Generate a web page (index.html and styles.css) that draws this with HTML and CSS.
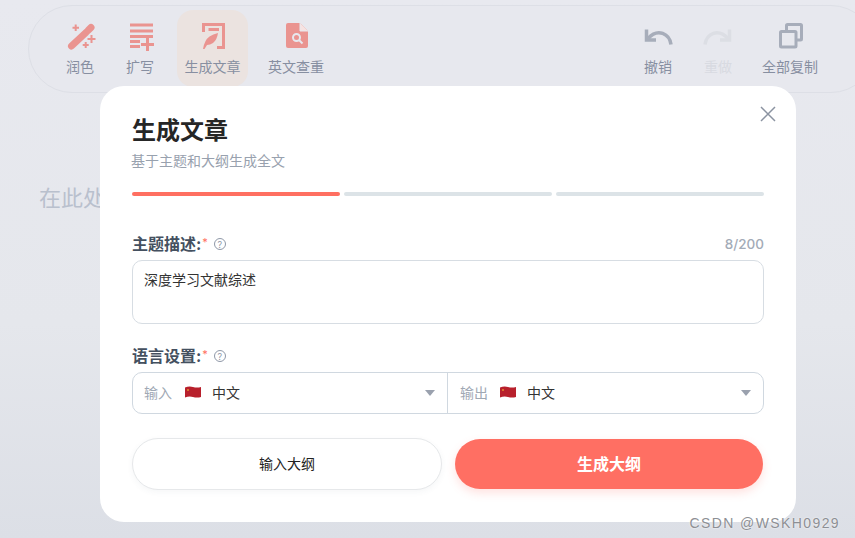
FILE: index.html

```html
<!DOCTYPE html>
<html lang="zh-CN">
<head>
    <meta charset="UTF-8">
    <meta name="viewport" content="width=device-width, initial-scale=1.0">
    <title>生成文章</title>
    <link rel="stylesheet" href="styles.css">
</head>
<body>
    <div class="toolbar">
        <div class="tool-group">
            <div class="tool">
                <svg class="icon" viewBox="0 0 30 30"><path class="wand" d="M6.500 24 21 10.500"/><path class="wand-tip" d="M23.500 8 26 5.500"/><path class="line" d="M7.500 5.700h6.500M10.700 2.500V9M22.500 17h8M26.500 13v8M17.700 23h6M20.700 20v6"/></svg>
                <span class="tool-label">润色</span>
            </div>
            <div class="tool">
                <svg class="icon" viewBox="0 0 30 30"><path class="line wide" d="M5 3h23M5 9h23M5 14.500h23M5 19.500h10M5 24.500h10M16 22.500h13M22.500 16v13"/></svg>
                <span class="tool-label">扩写</span>
            </div>
            <div class="tool tool-active">
                <svg class="icon" viewBox="0 0 30 30"><path class="stroke" d="M5.500 10V2.500h20V25.500H19"/><path class="line wide" d="M10.500 7.500H21"/><path class="fill" d="M5 27q1.500-9 6.500-12.500Q15 12 20 11q-1 7-5 10-3 2-6 2l-2.500 4Z"/></svg>
                <span class="tool-label">生成文章</span>
            </div>
            <div class="tool tool-wide">
                <svg class="icon" viewBox="0 0 30 30"><path class="fill" d="M7 1h12l8 8v15q0 2-2 2H7q-2 0-2-2V3q0-2 2-2Z"/><path class="cut" d="M19 1v8h8"/><circle class="glass" cx="15.500" cy="15.500" r="3.500"/><path class="glass" d="m18 18 3.500 3.500"/></svg>
                <span class="tool-label">英文查重</span>
            </div>
        </div>
        <div class="tool-group">
            <div class="tool">
                <svg class="icon" viewBox="0 0 30 30"><path class="gray" d="M28 22.500C26.500 12 15 5.500 5 16.500"/><path class="gray" d="M3.500 7.500V18H13"/></svg>
                <span class="tool-label">撤销</span>
            </div>
            <div class="tool tool-disabled">
                <svg class="icon" viewBox="0 0 30 30"><path class="gray" d="M2 22.500C3.500 12 15 5.500 25 16.500"/><path class="gray" d="M26.500 7.500V18H17"/></svg>
                <span class="tool-label">重做</span>
            </div>
            <div class="tool tool-copy">
                <svg class="icon" viewBox="0 0 30 30"><rect class="gray square" x="5.500" y="9.500" width="15.500" height="15.500" rx="1"/><path class="gray square" d="M11.500 8V3.500q0-1 1-1h13q1 0 1 1V17q0 1-1 1H22"/></svg>
                <span class="tool-label">全部复制</span>
            </div>
        </div>
    </div>

    <p class="placeholder">在此处输入内容</p>

    <div class="modal">
        <button class="close-btn" aria-label="关闭">
            <svg viewBox="0 0 16 16"><path d="M1 1l14 14M15 1 1 15"/></svg>
        </button>
        <h1 class="modal-title">生成文章</h1>
        <p class="modal-sub">基于主题和大纲生成全文</p>

        <div class="steps">
            <div class="step step-on"></div>
            <div class="step"></div>
            <div class="step"></div>
        </div>

        <div class="field-head topic-head">
            <label class="field-label">主题描述:</label>
            <span class="required">*</span>
            <span class="help">?</span>
            <span class="count">8/200</span>
        </div>
        <textarea class="topic-input">深度学习文献综述</textarea>

        <div class="field-head lang-head">
            <label class="field-label">语言设置:</label>
            <span class="required">*</span>
            <span class="help">?</span>
        </div>
        <div class="lang-select">
            <div class="lang-half">
                <span class="lang-type">输入</span>
                <svg class="flag" viewBox="0 0 16 12"><path fill="#b8202c" d="M0 1.500Q4 0 8 1t8 0v10q-4 1-8 0t-8 .5Z"/><path fill="#d9722c" d="M2 3h2v2H2z"/></svg>
                <span class="lang-name">中文</span>
                <span class="caret"></span>
            </div>
            <div class="lang-half lang-output">
                <span class="lang-type">输出</span>
                <svg class="flag" viewBox="0 0 16 12"><path fill="#b8202c" d="M0 1.500Q4 0 8 1t8 0v10q-4 1-8 0t-8 .5Z"/><path fill="#d9722c" d="M2 3h2v2H2z"/></svg>
                <span class="lang-name">中文</span>
                <span class="caret"></span>
            </div>
        </div>

        <div class="actions">
            <button class="btn btn-plain">输入大纲</button>
            <button class="btn btn-main">生成大纲</button>
        </div>
    </div>

    <div class="watermark">CSDN @WSKH0929</div>
</body>
</html>
```

FILE: styles.css

```css
* {
    box-sizing: border-box;
}
html, body {
    height: 100%;
}
body {
    margin: 0;
    padding-top: 5px;
    height: 538px;
    overflow: hidden;
    position: relative;
    font-family: "Inter", "Noto Sans CJK SC", sans-serif;
    background: linear-gradient(180deg, #e8e9ef 0%, #e5e7ec 60%, #dcdfe6 100%);
}
.toolbar {
    display: flex;
    justify-content: space-between;
    width: 847px;
    height: 88px;
    margin-left: 28px;
    padding: 4px 42px 4px 21px;
    border: 1px solid #dddfe6;
    border-radius: 44px;
    background: #e7e8ee;
}
.tool-group {
    display: flex;
}
.tool {
    display: flex;
    flex-direction: column;
    align-items: center;
    width: 60px;
    height: 77px;
    padding-top: 12px;
    color: #878fa1;
    font-size: 14px;
}
.tool-active {
    width: 71px;
    margin: 0 12px 0 7px;
    border-radius: 16px;
    background: #ebe3e0;
}
.tool-wide {
    width: 72px;
}
.tool-copy {
    width: 84px;
}
.tool-disabled {
    color: #d8dae1;
}
.tool-disabled .gray {
    stroke: #dcdee4;
}
.icon {
    width: 30px;
    height: 30px;
    flex: none;
    overflow: visible;
}
.tool-label {
    margin-top: 6px;
    line-height: 18px;
    white-space: nowrap;
}
.fill {
    fill: #ea9490;
}
.line {
    fill: none;
    stroke: #ea9490;
    stroke-width: 2;
}
.line.wide {
    stroke-width: 3;
}
.wand {
    fill: none;
    stroke: #ea9490;
    stroke-width: 7;
    stroke-linecap: round;
}
.wand-tip {
    fill: none;
    stroke: #ea9490;
    stroke-width: 7;
    stroke-linecap: round;
}
.stroke {
    fill: none;
    stroke: #ea9490;
    stroke-width: 3;
}
.cut {
    fill: #f6e3e2;
    stroke: #e7e8ee;
    stroke-width: 1;
}
.glass {
    fill: none;
    stroke: #e7e8ee;
    stroke-width: 2;
}
.gray {
    fill: none;
    stroke: #a7adba;
    stroke-width: 3.500;
}
.square {
    stroke-width: 3;
}
.placeholder {
    margin: 92px 0 0 39px;
    font-size: 22px;
    line-height: 26px;
    color: #b9c0cd;
    white-space: nowrap;
}
.modal {
    position: absolute;
    left: 100px;
    top: 86px;
    width: 696px;
    height: 436px;
    padding: 28px 32px 0;
    border-radius: 24px;
    background: #fff;
}
.close-btn {
    position: absolute;
    right: 20px;
    top: 20px;
    width: 16px;
    height: 16px;
    padding: 0;
    border: none;
    background: none;
}
.close-btn svg {
    display: block;
    fill: none;
    stroke: #8b93a1;
    stroke-width: 1.500;
}
.modal-title {
    margin: 0;
    font-size: 24px;
    line-height: 34px;
    font-weight: 700;
    color: #262626;
}
.modal-sub {
    margin: 3px 0 0 -1px;
    font-size: 14px;
    line-height: 20px;
    color: #98a1ae;
}
.steps {
    display: flex;
    gap: 4px;
    margin-top: 21px;
}
.step {
    flex: 1;
    height: 4px;
    border-radius: 2px;
    background: #dce3e7;
}
.step-on {
    background: #ff6f61;
}
.field-head {
    display: flex;
    align-items: center;
    height: 22px;
}
.topic-head {
    margin-top: 37px;
}
.lang-head {
    margin-top: 21px;
}
.field-label {
    margin-top: -2px;
    font-size: 16px;
    font-weight: 700;
    color: #44505f;
}
.required {
    margin: -5px 0 0 1px;
    font-size: 11px;
    color: #ff6f61;
}
.help {
    display: flex;
    align-items: center;
    justify-content: center;
    width: 12px;
    height: 12px;
    margin-left: 6px;
    border: 1px solid #8f98a8;
    border-radius: 50%;
    font-size: 9px;
    color: #8f98a8;
}
.count {
    margin-left: auto;
    font-size: 13.500px;
    font-weight: 500;
    color: #a3abb7;
}
.topic-input {
    display: block;
    width: 100%;
    height: 64px;
    margin-top: 5px;
    padding: 9px 11px;
    border: 1px solid #d7dde3;
    border-radius: 10px;
    font-family: inherit;
    font-size: 14px;
    line-height: 20px;
    color: #333;
    resize: none;
    outline: none;
}
.lang-select {
    display: flex;
    height: 42px;
    margin-top: 5px;
    border: 1px solid #d0d8e0;
    border-radius: 10px;
}
.lang-half {
    display: flex;
    align-items: center;
    width: 314px;
    padding: 0 12px 2px 11px;
    font-size: 14px;
}
.lang-output {
    flex: 1;
    padding-left: 12px;
    border-left: 1px solid #d0d8e0;
}
.lang-type {
    color: #a0a8b4;
}
.flag {
    width: 16px;
    height: 12px;
    margin: 0 11px 0 13px;
}
.lang-output .flag {
    margin-left: 12px;
}
.lang-name {
    color: #333;
}
.caret {
    margin: 2px 0 0 auto;
    border-left: 5.500px solid transparent;
    border-right: 5.500px solid transparent;
    border-top: 6px solid #9aa1ae;
}
.actions {
    display: flex;
    align-items: center;
    gap: 13px;
    margin-top: 24px;
    padding-right: 1px;
}
.btn {
    font-family: inherit;
    border-radius: 26px;
    cursor: pointer;
}
.btn-plain {
    width: 310px;
    height: 52px;
    padding-bottom: 4px;
    border: 1px solid #e6e8ea;
    background: #fff;
    font-size: 14px;
    color: #222;
    box-shadow: 0 2px 6px rgba(60, 70, 90, 0.05);
}
.btn-main {
    flex: 1;
    height: 50px;
    padding-bottom: 4px;
    border: none;
    background: #ff6f63;
    font-size: 16px;
    font-weight: 700;
    color: #fff;
    box-shadow: 0 4px 10px rgba(255, 111, 99, 0.2);
}
.watermark {
    position: absolute;
    right: 15px;
    top: 514px;
    font-family: "Liberation Sans", sans-serif;
    font-size: 14px;
    line-height: 18px;
    letter-spacing: 1.400px;
    color: #8d8f94;
    text-shadow: 0 0 2px #fff;
}
```
